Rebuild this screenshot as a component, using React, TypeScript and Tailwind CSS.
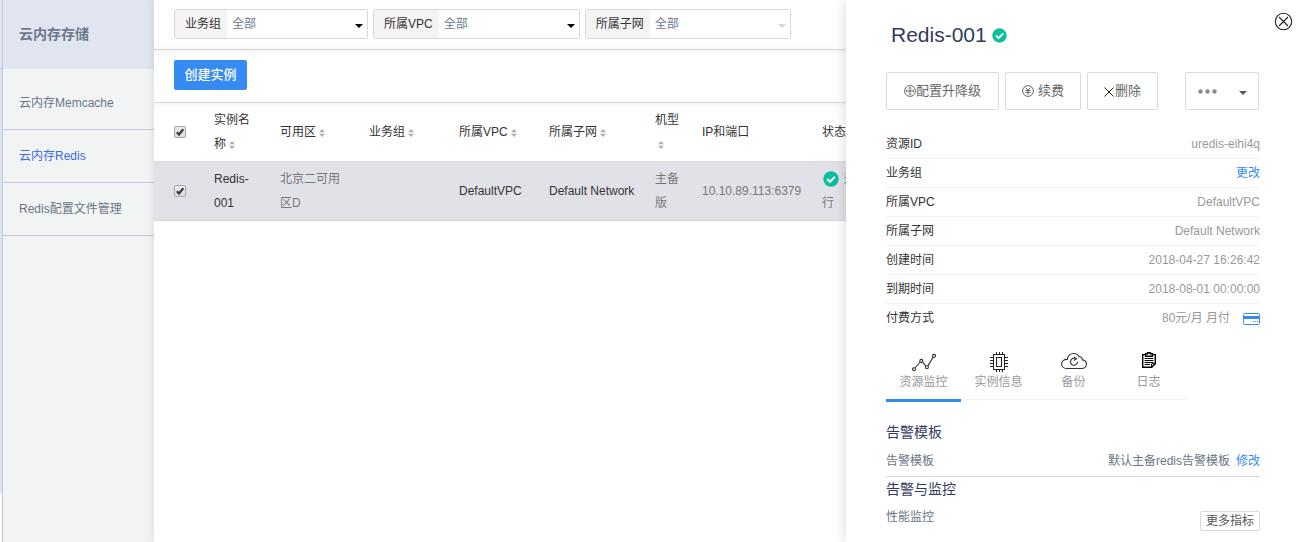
import { useState, type ReactNode } from "react";

function SortIcon() {
  return (
    <svg className="ml-[3px] inline-block h-2 w-1.5 align-[-1px]" viewBox="0 0 6 8" fill="#b0b0b3" aria-hidden="true">
      <path d="M3 0l3 3.200H0z" />
      <path d="M3 8l3-3.200H0z" />
    </svg>
  );
}

function CheckCircle({ className }: { className: string }) {
  return (
    <svg className={className} viewBox="0 0 16 16" aria-hidden="true">
      <circle cx="8" cy="8" r="7.7" fill="#09be9b" />
      <path d="M4.2 8l2.8 2.8 5-5" fill="none" stroke="#fff" strokeWidth="2" />
    </svg>
  );
}

function Caret({ className }: { className: string }) {
  return (
    <svg className={className} viewBox="0 0 8 4" fill="currentColor" aria-hidden="true">
      <path d="M0 0h8L4 4z" />
    </svg>
  );
}

function Check({ label }: { label: string }) {
  const [on, setOn] = useState(true);
  return (
    <span className="relative block h-3 w-3">
      <input
        type="checkbox"
        aria-label={label}
        checked={on}
        onChange={() => setOn(!on)}
        className="block h-3 w-3 appearance-none rounded-[2px] border border-[#a6a6a6] bg-linear-to-b from-[#eeeeee] to-[#dcdcdc]"
      />
      {on && (
        <svg className="pointer-events-none absolute inset-0 h-3 w-3" viewBox="0 0 12 12" aria-hidden="true">
          <path d="M2.8 6.2l2.2 2.3 4.3-5.3" fill="none" stroke="#3c3c3c" strokeWidth="2.2" />
        </svg>
      )}
    </span>
  );
}

function Filter({ id, label, disabled = false }: { id: string; label: string; disabled?: boolean }) {
  return (
    <div className="flex h-[30px] shrink-0 rounded-[2px] border border-[#dadadd]">
      <label htmlFor={id} className="flex items-center bg-[#f4f4f4] pr-1.5 pl-2.5 text-[#333]">
        {label}
      </label>
      <div className="relative">
        <select
          id={id}
          disabled={disabled}
          className="h-full w-[140px] appearance-none bg-white pl-[5px] text-[12px] text-[#6b7a90] opacity-100"
        >
          <option>全部</option>
        </select>
        <Caret
          className={
            disabled
              ? "pointer-events-none absolute top-[14px] right-1 h-1 w-2 text-[#d4d4da]"
              : "pointer-events-none absolute top-[14px] right-1 h-1 w-2 text-black"
          }
        />
      </div>
    </div>
  );
}

function Sidebar() {
  const items = ["云内存Memcache", "云内存Redis", "Redis配置文件管理"];
  return (
    <nav className="w-[152px] shrink-0 border-l border-[#c0c8de] bg-[#f2f4f4] text-[#6b7686]">
      <h2 className="mb-2 flex h-[69px] items-center bg-[#e1e5f0] pl-4 text-[14px] font-bold text-[#6d788c]">云内存存储</h2>
      {items.map((item, i) => (
        <a
          key={item}
          href="#"
          className={
            i === 1
              ? "flex h-[53px] items-center border-b border-[#c0c8de] pl-4 text-[#3a6be0]"
              : "flex h-[53px] items-center border-b border-[#c0c8de] pl-4"
          }
        >
          {item}
        </a>
      ))}
    </nav>
  );
}

const columns = [
  { name: "实例名称", sort: true },
  { name: "可用区", sort: true },
  { name: "业务组", sort: true },
  { name: "所属VPC", sort: true },
  { name: "所属子网", sort: true },
  { name: "机型", sort: true },
  { name: "IP和端口", sort: false },
  { name: "状态", sort: true },
];

function InstanceTable() {
  return (
    <table className="w-[718px] table-fixed text-left leading-6">
      <colgroup>
        <col className="w-[50px]" />
        <col className="w-[66px]" />
        <col className="w-[89px]" />
        <col className="w-[90px]" />
        <col className="w-[90px]" />
        <col className="w-[106px]" />
        <col className="w-[47px]" />
        <col className="w-[120px]" />
        <col className="w-[60px]" />
      </colgroup>
      <thead>
        <tr className="border-b border-[#dadadd] text-[#333]">
          <th className="py-[5px] pl-5">
            <Check label="全选" />
          </th>
          {columns.map((c) => (
            <th key={c.name} className="px-2.5 py-[5px] font-normal">
              {c.name}
              {c.sort && <SortIcon />}
            </th>
          ))}
        </tr>
      </thead>
      <tbody>
        <tr className="border-b border-[#d5d6db] bg-[#e1e2e8] text-[#777]">
          <td className="py-[5px] pl-5">
            <Check label="Redis-001" />
          </td>
          <td className="px-2.5 py-[5px] text-[#333]">Redis-001</td>
          <td className="px-2.5 py-[5px]">北京二可用区D</td>
          <td />
          <td className="px-2.5 py-[5px] text-[#333]">DefaultVPC</td>
          <td className="px-2.5 py-[5px] whitespace-nowrap text-[#333]">Default Network</td>
          <td className="px-2.5 py-[5px]">主备版</td>
          <td className="px-2.5 py-[5px] whitespace-nowrap">10.10.89.113:6379</td>
          <td className="px-2.5 py-[5px]">
            <CheckCircle className="mr-[5px] ml-px inline-block h-4 w-4 align-[-4px]" />
            运行
          </td>
        </tr>
      </tbody>
    </table>
  );
}

function InfoRow({ label, last = false, children }: { label: string; last?: boolean; children: ReactNode }) {
  return (
    <div
      className={
        last ? "flex h-7 items-center justify-between" : "flex h-[29px] items-center justify-between border-b border-[#f2f2f3]"
      }
    >
      <dt className="text-[#333]">{label}</dt>
      <dd className="flex items-center text-[#999]">{children}</dd>
    </div>
  );
}

const actionClass =
  "flex h-[38px] items-center justify-center rounded-[2px] border border-[#d9dade] bg-white text-[13px] text-[#666]";

const tabs: { name: string; icon: ReactNode }[] = [
  {
    name: "资源监控",
    icon: (
      <svg className="h-5 w-6" viewBox="0 0 24 20" fill="none" stroke="#333" strokeWidth="1.100">
        <path d="M2.900 16l5.300-6M10.500 9.900l3.400 4.200M15.900 13.900l5.200-8.700" />
        <circle cx="2" cy="17.200" r="1.500" />
        <circle cx="9.300" cy="8.900" r="1.500" />
        <circle cx="14.900" cy="15.300" r="1.500" />
        <circle cx="22" cy="3.900" r="1.500" />
      </svg>
    ),
  },
  {
    name: "实例信息",
    icon: (
      <svg className="h-5 w-[18px]" viewBox="0 0 18 20" fill="none" stroke="#222" strokeWidth="1">
        <rect x="3.5" y="2.5" width="11" height="15" />
        <rect x="6.5" y="5.5" width="5" height="9" />
        <path d="M6.5 0v2M9.5 0v2M12.5 0v2M6.5 18v2M9.5 18v2M12.5 18v2M0 5.5h3M0 8.5h3M0 11.5h3M0 14.5h3M15 5.5h3M15 8.5h3M15 11.5h3M15 14.5h3" />
      </svg>
    ),
  },
  {
    name: "备份",
    icon: (
      <svg className="h-5 w-[26px]" viewBox="0 0 26 20" fill="none" stroke="#333" strokeWidth="1.1">
        <path d="M5.5 16.5h15.2c2.6 0 4.7-1.8 4.7-4.3 0-2.3-1.7-4.1-4-4.3.1-2-1.5-3.4-3.4-3.1C17.200 2.800 15.200 1.500 12.700 1.500 9.300 1.500 6.500 3.900 6.300 7.400 3 7.100.6 9.300.6 12c0 2.500 2.100 4.500 4.900 4.500z" />
        <path d="M16.500 9.800a3.500 3.500 0 1 1-2-3.200" />
        <path d="M12.800 4.900l2.700 1.900-2.600 1.700" />
      </svg>
    ),
  },
  {
    name: "日志",
    icon: (
      <svg className="h-5 w-4" viewBox="0 0 16 20" fill="none" stroke="#000" strokeWidth="1.400">
        <path d="M4.500 2.600H1.700v12.700h9l3.600-3.600V2.600h-2.800" />
        <path d="M4.600 4.300V1.700h2V.7h2.800v1h2v2.600z" fill="#fff" />
        <path d="M3.600 6.500h8.800M3.600 8.500h8.800M3.600 10.500h8.800M3.600 12.500h5.400M10.600 15.300v-3.600h3.700" strokeWidth="1" />
      </svg>
    ),
  },
];

function DetailPanel() {
  return (
    <aside className="relative z-10 w-[452px] shrink-0 bg-white pr-[38px] pl-10 shadow-[0_0_12px_rgba(0,0,0,0.16)]">
      <button type="button" aria-label="关闭" className="absolute top-3 right-[5px]">
        <svg className="h-[19px] w-[19px]" viewBox="0 0 19 19" fill="none" stroke="#222" strokeWidth="1.1" aria-hidden="true">
          <circle cx="9.500" cy="9.500" r="8.200" />
          <path d="M5 5l9 9M14 5l-9 9" />
        </svg>
      </button>
      <header className="flex h-[70px] items-center gap-[5px] pl-[5px]">
        <h1 className="text-[21px] leading-6 text-[#333a60]">Redis-001</h1>
        <CheckCircle className="h-[15px] w-[15px]" />
      </header>

      <div className="mt-0.5 flex">
        <button type="button" className={`${actionClass} mr-1.5 w-[113px]`}>
          <svg className="h-3 w-3" viewBox="0 0 12 12" fill="none" stroke="#666" aria-hidden="true">
            <circle cx="6" cy="6" r="5.400" />
            <path d="M6 2v8M2 6h8" />
            <path d="M4.800 3.500L6 2.200l1.200 1.300M4.800 8.500L6 9.800l1.200-1.300M3.500 4.800L2.200 6l1.300 1.200M8.500 4.800L9.800 6 8.500 7.200" strokeWidth=".6" />
          </svg>
          配置升降级
        </button>
        <button type="button" className={`${actionClass} mr-1.5 w-[76px] gap-1`}>
          <svg className="h-3 w-3" viewBox="0 0 12 12" fill="none" stroke="#666" aria-hidden="true">
            <circle cx="6" cy="6" r="5.400" />
            <path d="M3.700 2.600L6 5.300l2.300-2.700M3.500 5.500h5M3.500 7.400h5M6 5.300v4.400" />
          </svg>
          续费
        </button>
        <button type="button" className={`${actionClass} w-[71px] gap-px`}>
          <svg className="mt-0.5 h-2.5 w-2.5" viewBox="0 0 10 10" fill="none" stroke="#222" aria-hidden="true">
            <path d="M.5.5l9 9M9.500.5l-9 9" />
          </svg>
          删除
        </button>
        <button type="button" aria-label="更多操作" className={`${actionClass} ml-[27px] w-[74px] gap-[22px]`}>
          <svg className="mt-px h-[5px] w-[19px]" viewBox="0 0 19 5" fill="#8c8c8c" aria-hidden="true">
            <circle cx="2.500" cy="2.500" r="2.200" />
            <circle cx="9.500" cy="2.500" r="2.200" />
            <circle cx="16.500" cy="2.500" r="2.200" />
          </svg>
          <Caret className="mt-1 h-1 w-2 text-[#555]" />
        </button>
      </div>

      <dl className="mt-5">
        <InfoRow label="资源ID">uredis-eihi4q</InfoRow>
        <InfoRow label="业务组">
          <a href="#" className="text-[#368bf3]">
            更改
          </a>
        </InfoRow>
        <InfoRow label="所属VPC">DefaultVPC</InfoRow>
        <InfoRow label="所属子网">Default Network</InfoRow>
        <InfoRow label="创建时间">2018-04-27 16:26:42</InfoRow>
        <InfoRow label="到期时间">2018-08-01 00:00:00</InfoRow>
        <InfoRow label="付费方式" last>
          80元/月 月付
          <svg className="mt-0.5 ml-[13px] h-3 w-[17px]" viewBox="0 0 17 12" aria-hidden="true">
            <rect x=".5" y=".5" width="16" height="11" rx="1.200" fill="#fff" stroke="#368bf3" />
            <path d="M0 3h17v3H0z" fill="#368bf3" />
            <path d="M10 8.500h5" stroke="#368bf3" strokeDasharray="1 1" />
          </svg>
        </InfoRow>
      </dl>

      <div role="tablist" className="mt-[18px] flex h-[52px] w-[300px]">
        {tabs.map((t, i) => (
          <button
            key={t.name}
            type="button"
            role="tab"
            aria-selected={i === 0}
            className={
              i === 0
                ? "flex w-[75px] flex-col items-center border-b-[3px] border-[#368bf3] pt-0.5 text-[#999]"
                : "mb-0.5 flex w-[75px] flex-col items-center border-b border-[#f2f2f3] pt-0.5 text-[#999]"
            }
          >
            {t.icon}
            <span className="leading-5">{t.name}</span>
          </button>
        ))}
      </div>

      <section className="border-b border-[#d9d9dc]">
        <h3 className="mt-5 text-[14px] leading-5 text-[#333a60]">告警模板</h3>
        <div className="flex h-[34px] items-center justify-between pt-1 text-[#6b7686]">
          <span>告警模板</span>
          <span className="flex gap-1.5">
            默认主备redis告警模板
            <a href="#" className="text-[#368bf3]">
              修改
            </a>
          </span>
        </div>
      </section>
      <section>
        <h3 className="mt-0.5 text-[14px] leading-5 text-[#333a60]">告警与监控</h3>
        <div className="flex items-start justify-between pt-2 text-[#6b7686]">
          <span className="leading-5">性能监控</span>
          <button
            type="button"
            className="mt-1 h-5 w-[60px] rounded-[2px] border border-[#d9d9dc] bg-white leading-[18px] text-[#555]"
          >
            更多指标
          </button>
        </div>
      </section>
    </aside>
  );
}

export default function App() {
  return (
    <div className="flex min-h-screen overflow-hidden bg-white font-['Liberation_Sans','Noto_Sans_CJK_SC',sans-serif] text-[12px]">
      <div className="flex w-0.5 shrink-0 flex-col">
        <div className="h-[69px] border-b border-[#c0c8de] bg-[#e1e5f0]" />
        <div className="h-[424px] bg-[#dfe3ee]" />
      </div>
      <Sidebar />
      <main className="min-w-0 flex-1 bg-white shadow-[0_0_8px_rgba(0,0,0,0.12)]">
        <div className="overflow-hidden">
          <div className="flex h-[50px] gap-[5px] border-b border-[#dadadd] pt-[9px] pl-5 shadow-[0_1px_8px_rgba(0,0,0,0.07)]">
            <Filter id="group" label="业务组" />
            <Filter id="vpc" label="所属VPC" />
            <Filter id="subnet" label="所属子网" disabled />
          </div>
          <div className="flex h-[53px] border-b border-[#dadadd] pt-2.5 pl-5 shadow-[0_1px_8px_rgba(0,0,0,0.07)]">
            <button type="button" className="h-[30px] w-[73px] rounded-[2px] bg-[#368bf3] text-[13px] font-medium text-white">
              创建实例
            </button>
          </div>
          <InstanceTable />
        </div>
      </main>
      <DetailPanel />
    </div>
  );
}
